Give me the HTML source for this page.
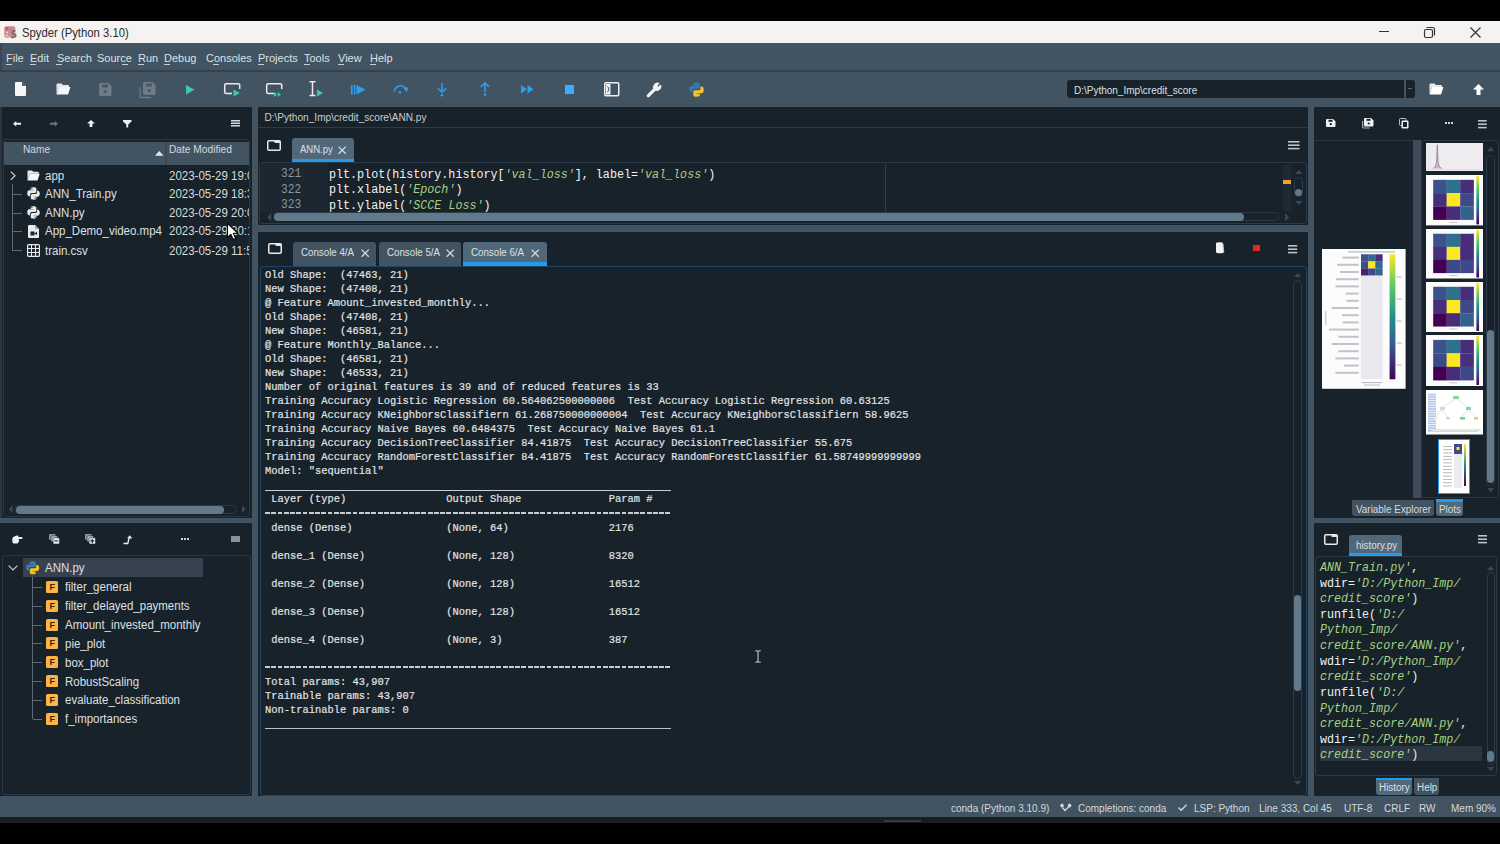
<!DOCTYPE html>
<html><head><meta charset="utf-8">
<style>
*{margin:0;padding:0;box-sizing:border-box}
html,body{width:1500px;height:844px;overflow:hidden;background:#000}
body{position:relative;font-family:"Liberation Sans",sans-serif;color:#E0E1E3}
.a{position:absolute}
svg.a{overflow:visible}
.t{position:absolute;white-space:pre;line-height:1}
.s{font-family:"Liberation Sans",sans-serif}
.m{font-family:"Liberation Mono",monospace}
</style></head><body>
<div class="a" style="left:0px;top:107px;width:1500px;height:689px;background:#425462;"></div><div class="a" style="left:0px;top:21px;width:1500px;height:22px;background:#F4F3F1;"></div><svg class="a" style="left:3.5px;top:26px" width="12.5" height="12" viewBox="0 0 12.5 12"><rect x="0.3" y="0.3" width="11" height="11.4" rx="2.2" fill="#D08A8A"/><rect x="1.2" y="1.2" width="3" height="3" fill="#C06868"/><rect x="5.5" y="1.5" width="2.5" height="2.2" fill="#C87676"/><circle cx="3.2" cy="6.5" r="1.1" fill="#F2D2D2"/><rect x="1.5" y="9" width="2.6" height="1.2" fill="#F5E0E0"/><path d="M11.5 4.8Q8.5 4.3 8.2 6.4Q8.2 8 10.3 8.3Q12.2 8.6 11.6 10.3Q10.8 11.7 6.6 11.2" fill="none" stroke="#6a6a6a" stroke-width="1.6"/><path d="M4.5 11.2h2.2" stroke="#f3e5e5" stroke-width="1"/></svg><div class="t s" style="left:22.00px;top:26.68px;font-size:12.43px;color:#2a2a2a;transform:scaleX(0.9091);transform-origin:0 0;">Spyder (Python 3.10)</div><div class="a" style="left:1379px;top:31px;width:10px;height:1px;background:#333;"></div><svg class="a" style="left:1424px;top:27px" width="11" height="11" viewBox="0 0 11 11"><rect x="0.5" y="2.5" width="8" height="8" rx="1.5" fill="none" stroke="#333" stroke-width="1.2"/><path d="M2.5 0.5h6a2 2 0 0 1 2 2v6" fill="none" stroke="#333" stroke-width="1.2"/></svg><svg class="a" style="left:1470px;top:27px" width="11" height="11" viewBox="0 0 11 11"><path d="M0.5 0.5L10.5 10.5M10.5 0.5L0.5 10.5" stroke="#333" stroke-width="1.2"/></svg><div class="a" style="left:0px;top:43px;width:1500px;height:27px;background:#425462;"></div><div class="a" style="left:0px;top:70px;width:1500px;height:37px;background:#425462;"></div><div class="a" style="left:0px;top:43px;width:2px;height:27px;background:#3a4655;"></div><div class="a" style="left:0px;top:70px;width:1500px;height:1.6px;background:#33414e;"></div><div class="t s" style="left:5.60px;top:52.04px;font-size:11.77px;color:#DDE0E3;transform:scaleX(0.9346);transform-origin:0 0;">File</div><div class="t s" style="left:29.90px;top:52.04px;font-size:11.77px;color:#DDE0E3;transform:scaleX(0.9346);transform-origin:0 0;">Edit</div><div class="t s" style="left:56.50px;top:52.04px;font-size:11.77px;color:#DDE0E3;transform:scaleX(0.9346);transform-origin:0 0;">Search</div><div class="t s" style="left:97.00px;top:52.04px;font-size:11.77px;color:#DDE0E3;transform:scaleX(0.9346);transform-origin:0 0;">Source</div><div class="t s" style="left:138.40px;top:52.04px;font-size:11.77px;color:#DDE0E3;transform:scaleX(0.9346);transform-origin:0 0;">Run</div><div class="t s" style="left:164.30px;top:52.04px;font-size:11.77px;color:#DDE0E3;transform:scaleX(0.9346);transform-origin:0 0;">Debug</div><div class="t s" style="left:205.90px;top:52.04px;font-size:11.77px;color:#DDE0E3;transform:scaleX(0.9346);transform-origin:0 0;">Consoles</div><div class="t s" style="left:257.80px;top:52.04px;font-size:11.77px;color:#DDE0E3;transform:scaleX(0.9346);transform-origin:0 0;">Projects</div><div class="t s" style="left:303.80px;top:52.04px;font-size:11.77px;color:#DDE0E3;transform:scaleX(0.9346);transform-origin:0 0;">Tools</div><div class="t s" style="left:337.60px;top:52.04px;font-size:11.77px;color:#DDE0E3;transform:scaleX(0.9346);transform-origin:0 0;">View</div><div class="t s" style="left:369.60px;top:52.04px;font-size:11.77px;color:#DDE0E3;transform:scaleX(0.9346);transform-origin:0 0;">Help</div><div class="a" style="left:6px;top:64px;width:6px;height:1px;background:#C9CDD0;"></div><div class="a" style="left:30px;top:64px;width:6px;height:1px;background:#C9CDD0;"></div><div class="a" style="left:56px;top:64px;width:6px;height:1px;background:#C9CDD0;"></div><div class="a" style="left:122px;top:64px;width:6px;height:1px;background:#C9CDD0;"></div><div class="a" style="left:138px;top:64px;width:6px;height:1px;background:#C9CDD0;"></div><div class="a" style="left:164px;top:64px;width:6px;height:1px;background:#C9CDD0;"></div><div class="a" style="left:213px;top:64px;width:6px;height:1px;background:#C9CDD0;"></div><div class="a" style="left:258px;top:64px;width:6px;height:1px;background:#C9CDD0;"></div><div class="a" style="left:304px;top:64px;width:6px;height:1px;background:#C9CDD0;"></div><div class="a" style="left:338px;top:64px;width:6px;height:1px;background:#C9CDD0;"></div><div class="a" style="left:370px;top:64px;width:6px;height:1px;background:#C9CDD0;"></div><svg class="a" style="left:15px;top:82px" width="11" height="14" viewBox="0 0 11 14"><path d="M0 1a1 1 0 0 1 1-1h6l4 4v9a1 1 0 0 1-1 1H1a1 1 0 0 1-1-1z" fill="#F5F6F7"/><path d="M7 0l4 4H8a1 1 0 0 1-1-1z" fill="#555"/></svg><svg class="a" style="left:55.6px;top:83px" width="15" height="12" viewBox="0 0 15 12"><path d="M0.5 1.5a1 1 0 0 1 1-1h4l1.5 1.5h5a1 1 0 0 1 1 1v1H3L0.5 11z" fill="#E6E8EA"/><path d="M3 4h11.5l-2.5 7.5H0.5z" fill="#F5F6F7"/></svg><svg class="a" style="left:98.6px;top:83px" width="12.5" height="13" viewBox="0 0 12.5 13"><path d="M0 1.5A1.5 1.5 0 0 1 1.5 0h8L12.5 3v8.5a1.5 1.5 0 0 1-1.5 1.5H1.5A1.5 1.5 0 0 1 0 11.5z" fill="#6F7A85"/><rect x="3" y="1.5" width="6" height="3" fill="#4a5664"/><circle cx="6.2" cy="8.5" r="1.6" fill="#4a5664"/></svg><svg class="a" style="left:139.5px;top:81.6px" width="15.5" height="15.5" viewBox="0 0 15.5 15.5"><path d="M0 5v9a1.5 1.5 0 0 0 1.5 1.5h9" fill="none" stroke="#6F7A85" stroke-width="1.3"/><path d="M3 1.5A1.5 1.5 0 0 1 4.5 0h8L15.5 3v8.5a1.5 1.5 0 0 1-1.5 1.5H4.5A1.5 1.5 0 0 1 3 11.5z" fill="#6F7A85"/><rect x="6" y="1.5" width="6" height="3" fill="#4a5664"/><circle cx="9.2" cy="8.5" r="1.6" fill="#4a5664"/></svg><svg class="a" style="left:186px;top:85px" width="9" height="9.5" viewBox="0 0 9 9.5"><path d="M0 0L8.5 4.75L0 9.5z" fill="#3CC8A9"/></svg><svg class="a" style="left:224px;top:83px" width="17" height="14" viewBox="0 0 17 14"><path d="M8 10.5H2.2a1.5 1.5 0 0 1-1.5-1.5V2.2A1.5 1.5 0 0 1 2.2 0.7h12a1.5 1.5 0 0 1 1.5 1.5V6" fill="none" stroke="#E8EAEC" stroke-width="1.5"/><path d="M9.5 6.5L16 10L9.5 13.5z" fill="#3CC8A9"/></svg><svg class="a" style="left:266px;top:83px" width="17" height="14" viewBox="0 0 17 14"><path d="M8 10.5H2.2a1.5 1.5 0 0 1-1.5-1.5V2.2A1.5 1.5 0 0 1 2.2 0.7h12a1.5 1.5 0 0 1 1.5 1.5V6" fill="none" stroke="#E8EAEC" stroke-width="1.5"/><path d="M8 9L11.2 11.5L8 14zM11.8 9L15 11.5L11.8 14z" fill="#3CC8A9"/></svg><svg class="a" style="left:309px;top:81px" width="15" height="16" viewBox="0 0 15 16"><path d="M0.5 0.8h6M0.5 14.6h6M3.5 0.8v13.8" fill="none" stroke="#E8EAEC" stroke-width="1.5"/><path d="M8 8.5L14 12L8 15.5z" fill="#3CC8A9"/></svg><svg class="a" style="left:350.7px;top:85px" width="15" height="9.5" viewBox="0 0 15 9.5"><rect x="0" y="0" width="1.6" height="9.5" fill="#2E9FEF"/><rect x="2.8" y="0" width="1.6" height="9.5" fill="#2E9FEF"/><path d="M5.5 0L14.7 4.75L5.5 9.5z" fill="#2E9FEF"/></svg><svg class="a" style="left:393px;top:84px" width="16" height="10" viewBox="0 0 16 10"><path d="M1.5 7.5A6 6 0 0 1 12.5 4.5" fill="none" stroke="#2E9FEF" stroke-width="1.6"/><path d="M10.5 3.5L15.5 3.5L13.5 8.5z" fill="#2E9FEF"/><circle cx="7" cy="8.3" r="1.3" fill="#2E9FEF"/></svg><svg class="a" style="left:437px;top:82.5px" width="10" height="14" viewBox="0 0 10 14"><path d="M5 0v8.5" stroke="#2E9FEF" stroke-width="1.5"/><path d="M0.8 5.2L5 9.2L9.2 5.2" fill="none" stroke="#2E9FEF" stroke-width="1.5"/><circle cx="5" cy="12.3" r="1.3" fill="#2E9FEF"/></svg><svg class="a" style="left:479.5px;top:82px" width="10" height="14" viewBox="0 0 10 14"><path d="M5 1v9" stroke="#2E9FEF" stroke-width="1.5"/><path d="M0.8 5L5 0.9L9.2 5" fill="none" stroke="#2E9FEF" stroke-width="1.5"/><circle cx="5" cy="12.6" r="1.3" fill="#2E9FEF"/></svg><svg class="a" style="left:521px;top:85.3px" width="13" height="8.5" viewBox="0 0 13 8.5"><path d="M0 0L6 4.25L0 8.5zM6.5 0L12.5 4.25L6.5 8.5z" fill="#2E9FEF"/></svg><div class="a" style="left:564.6px;top:84.9px;width:9.4px;height:9.3px;background:#37AEFE;"></div><svg class="a" style="left:604px;top:82px" width="15.5" height="14.5" viewBox="0 0 15.5 14.5"><rect x="0.75" y="0.75" width="14" height="13" rx="1.2" fill="none" stroke="#EEF0F2" stroke-width="1.5"/><rect x="2" y="2" width="4.5" height="10.5" fill="#EEF0F2"/><path d="M3.2 4.5l1.5 1.2v3.1L3.2 10" stroke="#425462" stroke-width="1" fill="none"/></svg><svg class="a" style="left:646px;top:81.5px" width="16" height="16" viewBox="0 0 16 16"><path d="M1.6 13.2L8 6.8A4 4 0 0 1 12.6 1.4L10.6 3.6L11.2 4.8L12.4 5.4L14.6 3.4A4 4 0 0 1 9.2 8L2.8 14.4a0.85 0.85 0 0 1-1.2-1.2z" fill="#F3F4F5" stroke="#F3F4F5" stroke-width="1.4" stroke-linejoin="round"/></svg><svg class="a" style="left:689px;top:82.4px" width="15" height="15" viewBox="0 0 15 15"><path d="M7.3 0.3C4 0.3 4.2 1.7 4.2 1.7V3.3h3.2v0.5H2.6S0.3 3.6 0.3 7.1s2 3.4 2 3.4h1.2V8.8s-0.1-2 2-2h3.3s1.9 0 1.9-1.9V1.9S10.9 0.3 7.3 0.3z" fill="#3B77A8"/><path d="M7.7 14.7c3.3 0 3.1-1.4 3.1-1.4v-1.6H7.6v-0.5h4.8s2.3 0.3 2.3-3.3-2-3.4-2-3.4h-1.2v1.7s0.1 2-2 2H6.2s-1.9 0-1.9 1.9v3.1s-0.3 1.6 3.4 1.6z" fill="#F2C230"/></svg><div class="a" style="left:1067px;top:80px;width:337px;height:18px;background:#17222A;border-radius:3px 0 0 3px"></div><div class="a" style="left:1406px;top:80px;width:9px;height:18px;background:#17222A;border-radius:0 3px 3px 0"></div><div class="a" style="left:1408px;top:88px;width:4px;height:1px;background:#51677A;"></div><div class="t s" style="left:1073.50px;top:85.14px;font-size:10.7px;color:#DDE0E3;transform:scaleX(0.9346);transform-origin:0 0;">D:\Python_Imp\credit_score</div><svg class="a" style="left:1429px;top:83px" width="15" height="12" viewBox="0 0 15 12"><path d="M0.5 1.5a1 1 0 0 1 1-1h4l1.5 1.5h5a1 1 0 0 1 1 1v1H3L0.5 11z" fill="#E6E8EA"/><path d="M3 4h11.5l-2.5 7.5H0.5z" fill="#FFFFFF"/></svg><svg class="a" style="left:1473px;top:84px" width="11" height="11" viewBox="0 0 11 11"><path d="M5.5 0L11 5.5H7.5V11h-4V5.5H0z" fill="#FFFFFF"/></svg><div class="a" style="left:0px;top:796px;width:1500px;height:21px;background:#425462;"></div><div class="a" style="left:0px;top:817px;width:1500px;height:6px;background:#1d1d1f;"></div><div class="a" style="left:884px;top:820px;width:37px;height:2px;background:#3a3a3c;"></div><div class="t s" style="left:951.20px;top:803.14px;font-size:10.7px;color:#D5D8DB;transform:scaleX(0.9346);transform-origin:0 0;">conda (Python 3.10.9)</div><div class="t s" style="left:1078.00px;top:803.14px;font-size:10.7px;color:#D5D8DB;transform:scaleX(0.9346);transform-origin:0 0;">Completions: conda</div><div class="t s" style="left:1193.90px;top:803.14px;font-size:10.7px;color:#D5D8DB;transform:scaleX(0.9346);transform-origin:0 0;">LSP: Python</div><div class="t s" style="left:1259.20px;top:803.14px;font-size:10.7px;color:#D5D8DB;transform:scaleX(0.9346);transform-origin:0 0;">Line 333, Col 45</div><div class="t s" style="left:1344.00px;top:803.14px;font-size:10.7px;color:#D5D8DB;transform:scaleX(0.9346);transform-origin:0 0;">UTF-8</div><div class="t s" style="left:1384.00px;top:803.14px;font-size:10.7px;color:#D5D8DB;transform:scaleX(0.9346);transform-origin:0 0;">CRLF</div><div class="t s" style="left:1418.80px;top:803.14px;font-size:10.7px;color:#D5D8DB;transform:scaleX(0.9346);transform-origin:0 0;">RW</div><div class="t s" style="left:1450.50px;top:803.14px;font-size:10.7px;color:#D5D8DB;transform:scaleX(0.9346);transform-origin:0 0;">Mem 90%</div><svg class="a" style="left:1061px;top:803px" width="10" height="9" viewBox="0 0 10 9"><path d="M1 1.5a1 1 0 1 0 0.1 0M8.5 1.5a1 1 0 1 0 0.1 0" stroke="#D5D8DB" stroke-width="1.6" stroke-linecap="round"/><path d="M1.5 4.5L4 7.5L9 2.5" fill="none" stroke="#D5D8DB" stroke-width="1.3"/></svg><svg class="a" style="left:1178px;top:804px" width="9" height="7" viewBox="0 0 9 7"><path d="M0.5 3.5L3.2 6.3L8.5 0.8" fill="none" stroke="#D5D8DB" stroke-width="1.3"/></svg><div class="a" style="left:0px;top:107px;width:252px;height:411px;background:#17222A;"></div><div class="a" style="left:0px;top:107px;width:2px;height:411px;background:#2a3541;"></div><svg class="a" style="left:13.4px;top:120.6px" width="8" height="5.5" viewBox="0 0 8 5.5"><path d="M0 2.75L3.2 0V1.7H8V3.8H3.2V5.5z" fill="#EEF0F2"/></svg><svg class="a" style="left:49.8px;top:120.8px" width="8" height="5.5" viewBox="0 0 8 5.5"><path d="M8 2.75L4.8 0V1.7H0V3.8H4.8V5.5z" fill="#6a7682"/></svg><svg class="a" style="left:86.7px;top:119.7px" width="8" height="7" viewBox="0 0 8 7"><path d="M4 0L8 3.6H5.4V7H2.6V3.6H0z" fill="#EEF0F2"/></svg><svg class="a" style="left:123px;top:119.7px" width="8.5" height="7.5" viewBox="0 0 8.5 7.5"><path d="M0 0h8.5v1.6L5.2 4.5V7.5H3.3V4.5L0 1.6z" fill="#EEF0F2"/></svg><svg class="a" style="left:230.5px;top:120px" width="9" height="6.5" viewBox="0 0 9 6.5"><rect y="0" width="9" height="1.5" fill="#D8DBDE"/><rect y="2.5" width="9" height="1.5" fill="#D8DBDE"/><rect y="5" width="9" height="1.5" fill="#D8DBDE"/></svg><div class="a" style="left:3px;top:139px;width:247px;height:378px;background:#17222A;border:1px solid #2a3643;border-radius:3px"></div><div class="a" style="left:4px;top:142px;width:161px;height:23px;background:#425462;"></div><div class="a" style="left:167px;top:142px;width:82px;height:23px;background:#425462;"></div><div class="a" style="left:165px;top:142px;width:2px;height:23px;background:#3c4858;"></div><div class="t s" style="left:23.40px;top:143.56px;font-size:10.914px;color:#D5D8DB;transform:scaleX(0.9346);transform-origin:0 0;">Name</div><div class="t s" style="left:169.40px;top:143.56px;font-size:10.914px;color:#D5D8DB;transform:scaleX(0.9346);transform-origin:0 0;">Date Modified</div><svg class="a" style="left:155px;top:151px" width="8.5" height="4.8" viewBox="0 0 8.5 4.8"><path d="M4.25 0L8.5 4.8H0z" fill="#E6E8EA"/></svg><div class="t s" style="left:45.40px;top:169.98px;font-size:12.305px;color:#DDE0E3;transform:scaleX(0.9346);transform-origin:0 0;">app</div><div class="a" style="left:168px;top:167.7px;width:81px;height:16px;overflow:hidden"><div class="t s" style="left:0.5px;top:2.29px;font-size:12.3px;transform:scaleX(0.935);transform-origin:0 0;color:#D8DBDE">2023-05-29 19:0</div></div><svg class="a" style="left:27px;top:169.7px" width="13" height="11" viewBox="0 0 13 11"><path d="M0.5 1.5a1 1 0 0 1 1-1h3.5l1.3 1.3h4.5a1 1 0 0 1 1 1v1H2.7L0.5 10.5z" fill="#E6E8EA"/><path d="M2.7 3.8h10l-2.2 6.7H0.5z" fill="#F5F6F7"/></svg><div class="t s" style="left:45.40px;top:188.08px;font-size:12.305px;color:#DDE0E3;transform:scaleX(0.9346);transform-origin:0 0;">ANN_Train.py</div><div class="a" style="left:168px;top:185.8px;width:81px;height:16px;overflow:hidden"><div class="t s" style="left:0.5px;top:2.29px;font-size:12.3px;transform:scaleX(0.935);transform-origin:0 0;color:#D8DBDE">2023-05-29 18:3</div></div><svg class="a" style="left:26.7px;top:187.3px" width="13" height="13" viewBox="0 0 13 13"><path d="M6.4 0.3C3.5 0.3 3.7 1.5 3.7 1.5V2.9h2.8v0.45H2.3S0.3 3.1 0.3 6.2s1.75 3 1.75 3h1.05V7.7s-0.1-1.75 1.75-1.75h2.9s1.65 0 1.65-1.65V1.65S9.55 0.3 6.4 0.3z" fill="#E8EAEC"/><path d="M6.7 12.8c2.9 0 2.7-1.2 2.7-1.2V10.1H6.6V9.65h4.2s2-0.25 2-2.9-1.75-3-1.75-3H10v1.5s0.1 1.75-1.75 1.75H5.4s-1.65 0-1.65 1.65v2.7s-0.25 1.4 2.95 1.4z" fill="#E8EAEC"/><circle cx="4.9" cy="1.6" r="0.6" fill="#17222A"/><circle cx="8.1" cy="11.4" r="0.6" fill="#17222A"/></svg><div class="t s" style="left:45.40px;top:206.88px;font-size:12.305px;color:#DDE0E3;transform:scaleX(0.9346);transform-origin:0 0;">ANN.py</div><div class="a" style="left:168px;top:204.6px;width:81px;height:16px;overflow:hidden"><div class="t s" style="left:0.5px;top:2.29px;font-size:12.3px;transform:scaleX(0.935);transform-origin:0 0;color:#D8DBDE">2023-05-29 20:0</div></div><svg class="a" style="left:26.7px;top:206.1px" width="13" height="13" viewBox="0 0 13 13"><path d="M6.4 0.3C3.5 0.3 3.7 1.5 3.7 1.5V2.9h2.8v0.45H2.3S0.3 3.1 0.3 6.2s1.75 3 1.75 3h1.05V7.7s-0.1-1.75 1.75-1.75h2.9s1.65 0 1.65-1.65V1.65S9.55 0.3 6.4 0.3z" fill="#E8EAEC"/><path d="M6.7 12.8c2.9 0 2.7-1.2 2.7-1.2V10.1H6.6V9.65h4.2s2-0.25 2-2.9-1.75-3-1.75-3H10v1.5s0.1 1.75-1.75 1.75H5.4s-1.65 0-1.65 1.65v2.7s-0.25 1.4 2.95 1.4z" fill="#E8EAEC"/><circle cx="4.9" cy="1.6" r="0.6" fill="#17222A"/><circle cx="8.1" cy="11.4" r="0.6" fill="#17222A"/></svg><div class="t s" style="left:45.40px;top:225.38px;font-size:12.305px;color:#DDE0E3;transform:scaleX(0.9346);transform-origin:0 0;">App_Demo_video.mp4</div><div class="a" style="left:168px;top:223.1px;width:81px;height:16px;overflow:hidden"><div class="t s" style="left:0.5px;top:2.29px;font-size:12.3px;transform:scaleX(0.935);transform-origin:0 0;color:#D8DBDE">2023-05-29 20:1</div></div><svg class="a" style="left:27.5px;top:224.6px" width="11" height="13" viewBox="0 0 11 13"><path d="M0 1a1 1 0 0 1 1-1h6l4 4v8a1 1 0 0 1-1 1H1a1 1 0 0 1-1-1z" fill="#E8EAEC"/><path d="M7 0l4 4H8a1 1 0 0 1-1-1z" fill="#9aa"/><path d="M2.5 6.5h4v4h-4zM6.5 8.5l2.5-1.8v3.6z" fill="#17222A"/></svg><div class="t s" style="left:45.40px;top:244.58px;font-size:12.305px;color:#DDE0E3;transform:scaleX(0.9346);transform-origin:0 0;">train.csv</div><div class="a" style="left:168px;top:242.3px;width:81px;height:16px;overflow:hidden"><div class="t s" style="left:0.5px;top:2.29px;font-size:12.3px;transform:scaleX(0.935);transform-origin:0 0;color:#D8DBDE">2023-05-29 11:5</div></div><svg class="a" style="left:26.5px;top:243.8px" width="13" height="13" viewBox="0 0 13 13"><rect x="0.6" y="0.6" width="11.8" height="11.8" rx="1" fill="none" stroke="#E8EAEC" stroke-width="1.2"/><path d="M0.6 4.5h11.8M0.6 8.5h11.8M4.5 0.6v11.8M8.5 0.6v11.8" stroke="#E8EAEC" stroke-width="1.1"/></svg><svg class="a" style="left:9.5px;top:170.5px" width="6" height="9.5" viewBox="0 0 6 9.5"><path d="M0.8 0.6L5 4.75L0.8 8.9" fill="none" stroke="#C9CDD0" stroke-width="1.3"/></svg><div class="a" style="left:12px;top:184px;width:1px;height:67px;background:#5f6a75;"></div><div class="a" style="left:13px;top:194px;width:9px;height:1px;background:#5f6a75;"></div><div class="a" style="left:13px;top:213px;width:9px;height:1px;background:#5f6a75;"></div><div class="a" style="left:13px;top:231px;width:9px;height:1px;background:#5f6a75;"></div><div class="a" style="left:13px;top:250px;width:9px;height:1px;background:#5f6a75;"></div><svg class="a" style="left:226.5px;top:222.5px" width="12" height="18" viewBox="0 0 12 18"><path d="M0.5 0.5L0.5 14.5L3.8 11.3L6.2 16.6L8.6 15.6L6.3 10.4L10.8 10z" fill="#FFFFFF" stroke="#0a0a0a" stroke-width="1.1" stroke-linejoin="round"/></svg><svg class="a" style="left:8.7px;top:505px" width="4" height="8.5" viewBox="0 0 4 8.5"><path d="M3.5 0L0 4.25L3.5 8.5z" fill="#3c4856"/></svg><div class="a" style="left:14px;top:505px;width:223px;height:9px;background:#17222A;border:1px solid #2d3a47;border-radius:4.5px"></div><div class="a" style="left:15.6px;top:505.5px;width:208px;height:8px;background:#60798B;border-radius:4px"></div><svg class="a" style="left:241.8px;top:505px" width="4" height="8.5" viewBox="0 0 4 8.5"><path d="M0 0L3.5 4.25L0 8.5z" fill="#3c4856"/></svg><div class="a" style="left:0px;top:523px;width:252px;height:273px;background:#17222A;"></div><svg class="a" style="left:11.9px;top:535px" width="10.5" height="9" viewBox="0 0 10.5 9"><path d="M0.3 4.2Q0.3 1.6 2.8 1.2L5.2 0.4Q6 0.2 6.2 1L6.4 2.1H9.6a0.9 0.9 0 0 1 0 1.8H6.6L7 5.2Q7 8.6 4 8.6H2.6Q0.3 8.6 0.3 6z" fill="#EEF0F2"/></svg><svg class="a" style="left:48.9px;top:534.3px" width="10.5" height="10" viewBox="0 0 10.5 10"><rect x="0" y="0" width="6.5" height="6" rx="1" fill="#8d97a1"/><rect x="2" y="1.8" width="6.5" height="6" rx="1" fill="#b9c0c7" stroke="#17222A" stroke-width="0.6"/><rect x="4" y="3.8" width="6.5" height="6.2" rx="1" fill="#EEF0F2" stroke="#17222A" stroke-width="0.6"/><path d="M5.3 6.9h4" stroke="#17222A" stroke-width="1.1"/></svg><svg class="a" style="left:85.3px;top:534.3px" width="10.5" height="10" viewBox="0 0 10.5 10"><rect x="0" y="0" width="6.5" height="6" rx="1" fill="#8d97a1"/><rect x="2" y="1.8" width="6.5" height="6" rx="1" fill="#b9c0c7" stroke="#17222A" stroke-width="0.6"/><rect x="4" y="3.8" width="6.5" height="6.2" rx="1" fill="#EEF0F2" stroke="#17222A" stroke-width="0.6"/><path d="M5.3 6.9h4M7.3 4.9v4" stroke="#17222A" stroke-width="1.1"/></svg><svg class="a" style="left:123px;top:534.5px" width="10" height="9" viewBox="0 0 10 9"><path d="M0.5 8.5H4.8L6.2 2.5" fill="none" stroke="#EEF0F2" stroke-width="1.3"/><path d="M4 3.2L6.8 0.3L9.3 3.6z" fill="#EEF0F2"/></svg><div class="a" style="left:181px;top:538px;width:2px;height:2px;background:#D0D4D8;"></div><div class="a" style="left:184px;top:538px;width:2px;height:2px;background:#D0D4D8;"></div><div class="a" style="left:187px;top:538px;width:2px;height:2px;background:#D0D4D8;"></div><div class="a" style="left:231px;top:535.7px;width:8.5px;height:6.8px;background:#8a939c;"></div><div class="a" style="left:2px;top:555px;width:249px;height:240px;background:#17222A;border:1px solid #2a3643;border-radius:3px"></div><div class="a" style="left:23px;top:558px;width:180px;height:19px;background:#37414F;"></div><svg class="a" style="left:7.6px;top:565px" width="10" height="5.5" viewBox="0 0 10 5.5"><path d="M0.6 0.6L5 4.9L9.4 0.6" fill="none" stroke="#C9CDD0" stroke-width="1.3"/></svg><svg class="a" style="left:26px;top:561px" width="13.5" height="13.5" viewBox="0 0 13.5 13.5"><path d="M6.6 0.3C3.6 0.3 3.8 1.55 3.8 1.55V3h2.9v0.45H2.35S0.3 3.2 0.3 6.4s1.8 3.1 1.8 3.1h1.1V7.9s-0.1-1.8 1.8-1.8h3s1.7 0 1.7-1.7V1.7S9.85 0.3 6.6 0.3z" fill="#3D7AB3"/><path d="M6.9 13.2c3 0 2.8-1.25 2.8-1.25V10.5H6.8v-0.45h4.35s2.05-0.25 2.05-3-1.8-3.1-1.8-3.1h-1.1v1.55s0.1 1.8-1.8 1.8h-3s-1.7 0-1.7 1.7v2.8s-0.25 1.45 3.05 1.45z" fill="#F5C518"/></svg><div class="t s" style="left:45.30px;top:562.18px;font-size:12.305px;color:#DDE0E3;transform:scaleX(0.9346);transform-origin:0 0;">ANN.py</div><div class="a" style="left:32px;top:577px;width:1px;height:142px;background:#5f6a75;"></div><div class="a" style="left:33px;top:587px;width:9px;height:1px;background:#5f6a75;"></div><div class="a" style="left:46.2px;top:581px;width:12px;height:12px;background:#FBB445;border-radius:1.5px"></div><div class="t s" style="left:49.50px;top:583.18px;font-size:9px;color:#3d2800;font-weight:bold">F</div><div class="t s" style="left:65.30px;top:581.48px;font-size:12.305px;color:#DDE0E3;transform:scaleX(0.9346);transform-origin:0 0;">filter_general</div><div class="a" style="left:33px;top:606px;width:9px;height:1px;background:#5f6a75;"></div><div class="a" style="left:46.2px;top:600px;width:12px;height:12px;background:#FBB445;border-radius:1.5px"></div><div class="t s" style="left:49.50px;top:602.18px;font-size:9px;color:#3d2800;font-weight:bold">F</div><div class="t s" style="left:65.30px;top:600.30px;font-size:12.305px;color:#DDE0E3;transform:scaleX(0.9346);transform-origin:0 0;">filter_delayed_payments</div><div class="a" style="left:33px;top:625px;width:9px;height:1px;background:#5f6a75;"></div><div class="a" style="left:46.2px;top:619px;width:12px;height:12px;background:#FBB445;border-radius:1.5px"></div><div class="t s" style="left:49.50px;top:621.18px;font-size:9px;color:#3d2800;font-weight:bold">F</div><div class="t s" style="left:65.30px;top:619.12px;font-size:12.305px;color:#DDE0E3;transform:scaleX(0.9346);transform-origin:0 0;">Amount_invested_monthly</div><div class="a" style="left:33px;top:643px;width:9px;height:1px;background:#5f6a75;"></div><div class="a" style="left:46.2px;top:637px;width:12px;height:12px;background:#FBB445;border-radius:1.5px"></div><div class="t s" style="left:49.50px;top:639.18px;font-size:9px;color:#3d2800;font-weight:bold">F</div><div class="t s" style="left:65.30px;top:637.94px;font-size:12.305px;color:#DDE0E3;transform:scaleX(0.9346);transform-origin:0 0;">pie_plot</div><div class="a" style="left:33px;top:662px;width:9px;height:1px;background:#5f6a75;"></div><div class="a" style="left:46.2px;top:656px;width:12px;height:12px;background:#FBB445;border-radius:1.5px"></div><div class="t s" style="left:49.50px;top:658.18px;font-size:9px;color:#3d2800;font-weight:bold">F</div><div class="t s" style="left:65.30px;top:656.76px;font-size:12.305px;color:#DDE0E3;transform:scaleX(0.9346);transform-origin:0 0;">box_plot</div><div class="a" style="left:33px;top:681px;width:9px;height:1px;background:#5f6a75;"></div><div class="a" style="left:46.2px;top:675px;width:12px;height:12px;background:#FBB445;border-radius:1.5px"></div><div class="t s" style="left:49.50px;top:677.18px;font-size:9px;color:#3d2800;font-weight:bold">F</div><div class="t s" style="left:65.30px;top:675.58px;font-size:12.305px;color:#DDE0E3;transform:scaleX(0.9346);transform-origin:0 0;">RobustScaling</div><div class="a" style="left:33px;top:700px;width:9px;height:1px;background:#5f6a75;"></div><div class="a" style="left:46.2px;top:694px;width:12px;height:12px;background:#FBB445;border-radius:1.5px"></div><div class="t s" style="left:49.50px;top:696.18px;font-size:9px;color:#3d2800;font-weight:bold">F</div><div class="t s" style="left:65.30px;top:694.40px;font-size:12.305px;color:#DDE0E3;transform:scaleX(0.9346);transform-origin:0 0;">evaluate_classification</div><div class="a" style="left:33px;top:719px;width:9px;height:1px;background:#5f6a75;"></div><div class="a" style="left:46.2px;top:713px;width:12px;height:12px;background:#FBB445;border-radius:1.5px"></div><div class="t s" style="left:49.50px;top:715.18px;font-size:9px;color:#3d2800;font-weight:bold">F</div><div class="t s" style="left:65.30px;top:713.22px;font-size:12.305px;color:#DDE0E3;transform:scaleX(0.9346);transform-origin:0 0;">f_importances</div><div class="a" style="left:258px;top:107px;width:1050px;height:118px;background:#17222A;"></div><div class="t s" style="left:264.40px;top:113.15px;font-size:10.1px;color:#C9CDD0;">D:\Python_Imp\credit_score\ANN.py</div><div class="a" style="left:258px;top:127px;width:1050px;height:1px;background:#2c3947;"></div><svg class="a" style="left:267.3px;top:139.8px" width="14" height="11" viewBox="0 0 14 11"><rect x="0.75" y="0.75" width="12.5" height="9.5" rx="1.2" fill="none" stroke="#E8EAEC" stroke-width="1.5"/><rect x="7.5" y="0.75" width="5.8" height="2.2" fill="#E8EAEC"/></svg><div class="a" style="left:292.3px;top:138.3px;width:61.7px;height:24px;background:#51677A;border-radius:3px 3px 0 0"></div><div class="a" style="left:292.3px;top:158.8px;width:61.7px;height:3.4px;background:#259AE9;"></div><div class="t s" style="left:299.80px;top:145.20px;font-size:10.165px;color:#DDE0E3;transform:scaleX(0.9346);transform-origin:0 0;">ANN.py</div><svg class="a" style="left:338px;top:145.6px" width="8.4" height="8.4" viewBox="0 0 8.4 8.4"><path d="M0.6 0.6L7.800000000000001 7.800000000000001M7.800000000000001 0.6L0.6 7.800000000000001" stroke="#D8DBDE" stroke-width="1.3"/></svg><svg class="a" style="left:1288px;top:140.7px" width="11.5" height="8.5" viewBox="0 0 11.5 8.5"><rect y="0" width="11.5" height="1.6" fill="#BCC2C8"/><rect y="3.4" width="11.5" height="1.6" fill="#BCC2C8"/><rect y="6.8" width="11.5" height="1.6" fill="#BCC2C8"/></svg><div class="a" style="left:259px;top:162px;width:1048px;height:62px;background:#17222A;border:1px solid #2c3947;border-radius:3px"></div><div class="a" style="left:260px;top:163px;width:67.5px;height:50px;background:#1C2731;"></div><div class="t m" style="left:281.00px;top:167.99px;font-size:12.544px;color:#8C96A0;transform:scaleX(0.8929);transform-origin:0 0;">321</div><div class="t m" style="left:329.4px;top:168.60px;font-size:12.65px;transform:scaleX(0.9257);transform-origin:0 0;color:#F2F3F4">plt.plot(history.history[<i style="color:#A6D282">'val_loss'</i>], label=<i style="color:#A6D282">'val_loss'</i>)</div><div class="t m" style="left:281.00px;top:183.54px;font-size:12.544px;color:#8C96A0;transform:scaleX(0.8929);transform-origin:0 0;">322</div><div class="t m" style="left:329.4px;top:184.15px;font-size:12.65px;transform:scaleX(0.9257);transform-origin:0 0;color:#F2F3F4">plt.xlabel(<i style="color:#A6D282">'Epoch'</i>)</div><div class="t m" style="left:281.00px;top:199.09px;font-size:12.544px;color:#8C96A0;transform:scaleX(0.8929);transform-origin:0 0;">323</div><div class="t m" style="left:329.4px;top:199.70px;font-size:12.65px;transform:scaleX(0.9257);transform-origin:0 0;color:#F2F3F4">plt.ylabel(<i style="color:#A6D282">'SCCE Loss'</i>)</div><div class="a" style="left:885px;top:164px;width:1px;height:49px;background:#323e4a;"></div><div class="a" style="left:1283px;top:165px;width:8px;height:46px;background:#1e2a35;"></div><div class="a" style="left:1283.3px;top:180.4px;width:7.7px;height:3.5px;background:#F0A030;"></div><svg class="a" style="left:1294.5px;top:169.7px" width="7.7" height="4" viewBox="0 0 7.7 4"><path d="M3.85 0L7.7 4H0z" fill="#3c4856"/></svg><div class="a" style="left:1294px;top:177.4px;width:9px;height:20px;background:#17222A;border:1px solid #2d3a47;border-radius:4.5px"></div><div class="a" style="left:1294.8px;top:189.2px;width:7.4px;height:7.2px;background:#60798B;border-radius:3.7px"></div><svg class="a" style="left:1294.5px;top:201px" width="7.7" height="4" viewBox="0 0 7.7 4"><path d="M0 0H7.7L3.85 4z" fill="#3c4856"/></svg><svg class="a" style="left:266.6px;top:213px" width="4.3" height="8.4" viewBox="0 0 4.3 8.4"><path d="M4.3 0L0 4.2L4.3 8.4z" fill="#3c4856"/></svg><div class="a" style="left:272.5px;top:212.3px;width:1006.5px;height:9px;background:#17222A;border:1px solid #2d3a47;border-radius:4.5px"></div><div class="a" style="left:273.8px;top:212.8px;width:969.8px;height:8px;background:#60798B;border-radius:4px"></div><svg class="a" style="left:1285px;top:213px" width="4.2" height="8.4" viewBox="0 0 4.2 8.4"><path d="M0 0L4.2 4.2L0 8.4z" fill="#3c4856"/></svg><div class="a" style="left:258px;top:232px;width:1050px;height:564px;background:#17222A;"></div><svg class="a" style="left:268px;top:243px" width="14" height="11" viewBox="0 0 14 11"><rect x="0.75" y="0.75" width="12.5" height="9.5" rx="1.2" fill="none" stroke="#E8EAEC" stroke-width="1.5"/><rect x="7.5" y="0.75" width="5.8" height="2.2" fill="#E8EAEC"/></svg><div class="a" style="left:293px;top:242px;width:83px;height:23.6px;background:#425462;border-radius:3px 3px 0 0"></div><div class="t s" style="left:301.20px;top:248.17px;font-size:10.433px;color:#DDE0E3;transform:scaleX(0.9346);transform-origin:0 0;">Console 4/A</div><svg class="a" style="left:360.6px;top:248.8px" width="8.4" height="8.4" viewBox="0 0 8.4 8.4"><path d="M0.6 0.6L7.800000000000001 7.800000000000001M7.800000000000001 0.6L0.6 7.800000000000001" stroke="#D8DBDE" stroke-width="1.3"/></svg><div class="a" style="left:378.6px;top:242px;width:82.39999999999998px;height:23.6px;background:#425462;border-radius:3px 3px 0 0"></div><div class="t s" style="left:386.80px;top:248.17px;font-size:10.433px;color:#DDE0E3;transform:scaleX(0.9346);transform-origin:0 0;">Console 5/A</div><svg class="a" style="left:446.20000000000005px;top:248.8px" width="8.4" height="8.4" viewBox="0 0 8.4 8.4"><path d="M0.6 0.6L7.800000000000001 7.800000000000001M7.800000000000001 0.6L0.6 7.800000000000001" stroke="#D8DBDE" stroke-width="1.3"/></svg><div class="a" style="left:463.2px;top:242px;width:83.59999999999997px;height:23.6px;background:#51677A;border-radius:3px 3px 0 0"></div><div class="a" style="left:463.2px;top:262.4px;width:83.59999999999997px;height:3.2px;background:#259AE9;"></div><div class="t s" style="left:471.40px;top:248.17px;font-size:10.433px;color:#DDE0E3;transform:scaleX(0.9346);transform-origin:0 0;">Console 6/A</div><svg class="a" style="left:530.8px;top:248.8px" width="8.4" height="8.4" viewBox="0 0 8.4 8.4"><path d="M0.6 0.6L7.800000000000001 7.800000000000001M7.800000000000001 0.6L0.6 7.800000000000001" stroke="#D8DBDE" stroke-width="1.3"/></svg><svg class="a" style="left:1215px;top:242.4px" width="9.5" height="11.5" viewBox="0 0 9.5 11.5"><path d="M1 1.5Q1 0.3 4.5 0.3Q8 0.3 8 1.5L9 10Q9 11.3 5 11.3Q1 11.3 1 10z" fill="#F2F3F4"/><path d="M7.8 1.5L8.8 9.8" stroke="#b8bec4" stroke-width="1"/></svg><div class="a" style="left:1253px;top:244.6px;width:6.8px;height:6.6px;background:#E8261A;"></div><svg class="a" style="left:1288.4px;top:245px" width="9.2" height="8.5" viewBox="0 0 9.2 8.5"><rect y="0" width="9.2" height="1.6" fill="#BCC2C8"/><rect y="3.4" width="9.2" height="1.6" fill="#BCC2C8"/><rect y="6.8" width="9.2" height="1.6" fill="#BCC2C8"/></svg><div class="a" style="left:259.5px;top:265.8px;width:1047.5px;height:530px;background:#17222A;border:1.5px solid #1F4466;border-radius:3px"></div><svg class="a" style="left:1294px;top:273px" width="7.4" height="4" viewBox="0 0 7.4 4"><path d="M3.7 0L7.4 4H0z" fill="#3c4856"/></svg><div class="a" style="left:1293px;top:280px;width:9px;height:499px;background:#17222A;border:1px solid #2d3a47;border-radius:4.5px"></div><div class="a" style="left:1293.8px;top:595px;width:7.4px;height:96px;background:#60798B;border-radius:3.7px"></div><svg class="a" style="left:1294px;top:781px" width="7.4" height="4" viewBox="0 0 7.4 4"><path d="M0 0H7.4L3.7 4z" fill="#3c4856"/></svg><div class="a m" style="left:264.6px;top:267.71px;font-size:11.468px;transform:scaleX(0.9091);transform-origin:0 0;line-height:14.04px;white-space:pre;color:#E2E4E6;-webkit-text-stroke:0.2px #E2E4E6">Old Shape:  (47463, 21)
New Shape:  (47408, 21)
@ Feature Amount_invested_monthly...
Old Shape:  (47408, 21)
New Shape:  (46581, 21)
@ Feature Monthly_Balance...
Old Shape:  (46581, 21)
New Shape:  (46533, 21)
Number of original features is 39 and of reduced features is 33
Training Accuracy Logistic Regression 60.564062500000006  Test Accuracy Logistic Regression 60.63125
Training Accuracy KNeighborsClassifiern 61.268750000000004  Test Accuracy KNeighborsClassifiern 58.9625
Training Accuracy Naive Bayes 60.6484375  Test Accuracy Naive Bayes 61.1
Training Accuracy DecisionTreeClassifier 84.41875  Test Accuracy DecisionTreeClassifier 55.675
Training Accuracy RandomForestClassifier 84.41875  Test Accuracy RandomForestClassifier 61.58749999999999
Model: "sequential"

 Layer (type)                Output Shape              Param #

 dense (Dense)               (None, 64)                2176

 dense_1 (Dense)             (None, 128)               8320

 dense_2 (Dense)             (None, 128)               16512

 dense_3 (Dense)             (None, 128)               16512

 dense_4 (Dense)             (None, 3)                 387


Total params: 43,907
Trainable params: 43,907
Non-trainable params: 0</div><div class="a" style="left:264.6px;top:490px;width:406.6px;height:1.4px;background:#C9CDD0;"></div><div class="a" style="left:264.6px;top:727.5px;width:406.6px;height:1.1px;background:#B9BEC3;"></div><div class="a" style="left:264.6px;top:512.3px;width:406.6px;height:2.2px;background:repeating-linear-gradient(90deg,#C9CDD0 0,#C9CDD0 4.9px,transparent 4.9px,transparent 6.256px);"></div><div class="a" style="left:264.6px;top:666.3px;width:406.6px;height:2.2px;background:repeating-linear-gradient(90deg,#C9CDD0 0,#C9CDD0 4.9px,transparent 4.9px,transparent 6.256px);"></div><svg class="a" style="left:754.5px;top:650.3px" width="6" height="13" viewBox="0 0 6 13"><path d="M0.3 0.6Q3 0.6 3 2.2Q3 0.6 5.7 0.6M0.3 12.4Q3 12.4 3 10.8Q3 12.4 5.7 12.4M3 1.8v9.4" fill="none" stroke="#A9B1B9" stroke-width="1.3"/></svg><div class="a" style="left:1314px;top:107px;width:186px;height:411px;background:#17222A;"></div><svg class="a" style="left:1325.8px;top:118.8px" width="9.5" height="8" viewBox="0 0 9.5 8"><path d="M0 1a1 1 0 0 1 1-1h6l2.5 2.5V7a1 1 0 0 1-1 1H1a1 1 0 0 1-1-1z" fill="#EEF0F2"/><rect x="2.5" y="0.8" width="4" height="2" fill="#17222A"/><circle cx="4.75" cy="5.2" r="1.1" fill="#17222A"/></svg><svg class="a" style="left:1361.7px;top:118px" width="11.5" height="10.5" viewBox="0 0 11.5 10.5"><path d="M0.6 3v5.8a1.2 1.2 0 0 0 1.2 1.2h6" fill="none" stroke="#aab2ba" stroke-width="1.1"/><path d="M2 1a1 1 0 0 1 1-1h6l2.5 2.5V7.5a1 1 0 0 1-1 1H3a1 1 0 0 1-1-1z" fill="#EEF0F2"/><rect x="4.5" y="0.8" width="4" height="2" fill="#17222A"/><circle cx="6.75" cy="5.5" r="1.1" fill="#17222A"/></svg><svg class="a" style="left:1399px;top:118px" width="10" height="10.5" viewBox="0 0 10 10.5"><rect x="0.5" y="0.5" width="6.5" height="7" rx="1" fill="none" stroke="#b8bfc6" stroke-width="1"/><rect x="2.5" y="2.5" width="7" height="8" rx="1.2" fill="#EEF0F2"/><rect x="4" y="4" width="4" height="5" fill="#17222A"/></svg><div class="a" style="left:1445.4px;top:122px;width:2px;height:2px;background:#D0D4D8;"></div><div class="a" style="left:1448.3000000000002px;top:122px;width:2px;height:2px;background:#D0D4D8;"></div><div class="a" style="left:1451.2px;top:122px;width:2px;height:2px;background:#D0D4D8;"></div><svg class="a" style="left:1478.3px;top:120px" width="8.7" height="8.5" viewBox="0 0 8.7 8.5"><rect y="0" width="8.7" height="1.6" fill="#BCC2C8"/><rect y="3.4" width="8.7" height="1.6" fill="#BCC2C8"/><rect y="6.8" width="8.7" height="1.6" fill="#BCC2C8"/></svg><div class="a" style="left:1314px;top:140px;width:99.2px;height:357.5px;background:#17222A;border-top:1px solid #2a3643"></div><div class="a" style="left:1413.2px;top:140px;width:8.1px;height:357.5px;background:#3f4b59;"></div><div class="a" style="left:1421.3px;top:140px;width:77.4px;height:357.5px;background:#17222A;border:1px solid #2a3643;border-radius:3px"></div><svg class="a" style="left:1322.4px;top:249px" width="83.6" height="139.8" viewBox="0 0 83.6 139.8"><rect width="83.6" height="139.8" fill="#FCFCFD"/><rect x="26" y="2.3" width="47" height="1.2" fill="#b8b8c0"/><rect x="39.00" y="5.30" width="7.3" height="7.25" fill="#3b528b"/><rect x="46.17" y="5.30" width="7.3" height="7.25" fill="#31688e"/><rect x="53.34" y="5.30" width="7.3" height="7.25" fill="#472d7b"/><rect x="39.00" y="12.40" width="7.3" height="7.25" fill="#3e4a89"/><rect x="46.17" y="12.40" width="7.3" height="7.25" fill="#fde725"/><rect x="53.34" y="12.40" width="7.3" height="7.25" fill="#31688e"/><rect x="39.00" y="19.50" width="7.3" height="7.25" fill="#482173"/><rect x="46.17" y="19.50" width="7.3" height="7.25" fill="#3e4989"/><rect x="53.34" y="19.50" width="7.3" height="7.25" fill="#31688e"/><rect x="39" y="26.6" width="21.5" height="103.5" fill="#E9E8EF"/><defs><linearGradient id="vir2" x1="0" y1="1" x2="0" y2="0"><stop offset="0" stop-color="#440154"/><stop offset="0.25" stop-color="#3b528b"/><stop offset="0.5" stop-color="#21918c"/><stop offset="0.75" stop-color="#5ec962"/><stop offset="1" stop-color="#fde725"/></linearGradient></defs><rect x="67.6" y="5.3" width="5.8" height="125" fill="url(#vir2)"/><rect x="20.5" y="7.6" width="16.3" height="2.0" fill="#c2c2ca"/><rect x="15.0" y="14.8" width="21.8" height="2.0" fill="#c2c2ca"/><rect x="18.1" y="22.0" width="18.7" height="2.0" fill="#c2c2ca"/><rect x="13.9" y="29.2" width="22.9" height="2.0" fill="#c2c2ca"/><rect x="13.5" y="36.4" width="23.3" height="2.0" fill="#c2c2ca"/><rect x="23.6" y="43.6" width="13.2" height="2.0" fill="#c2c2ca"/><rect x="24.6" y="50.8" width="12.2" height="2.0" fill="#c2c2ca"/><rect x="9.7" y="58.0" width="27.1" height="2.0" fill="#c2c2ca"/><rect x="20.1" y="65.2" width="16.7" height="2.0" fill="#c2c2ca"/><rect x="20.6" y="72.4" width="16.2" height="2.0" fill="#c2c2ca"/><rect x="6.9" y="79.6" width="29.9" height="2.0" fill="#c2c2ca"/><rect x="16.3" y="86.8" width="20.5" height="2.0" fill="#c2c2ca"/><rect x="9.7" y="94.0" width="27.1" height="2.0" fill="#c2c2ca"/><rect x="16.2" y="101.2" width="20.6" height="2.0" fill="#c2c2ca"/><rect x="13.3" y="108.4" width="23.5" height="2.0" fill="#c2c2ca"/><rect x="22.1" y="115.6" width="14.7" height="2.0" fill="#c2c2ca"/><rect x="13.4" y="122.8" width="23.4" height="2.0" fill="#c2c2ca"/><rect x="74.7" y="27.5" width="5" height="1.1" fill="#b8b8c0"/><rect x="74.7" y="49.5" width="5" height="1.1" fill="#b8b8c0"/><rect x="74.7" y="71.5" width="5" height="1.1" fill="#b8b8c0"/><rect x="74.7" y="93.5" width="5" height="1.1" fill="#b8b8c0"/><rect x="74.7" y="115.5" width="5" height="1.1" fill="#b8b8c0"/><rect x="40" y="133" width="20" height="1.1" fill="#b8b8c0"/><rect x="42" y="135.5" width="16" height="1.1" fill="#c0c0c8"/><rect x="3.2" y="62" width="1.1" height="14" fill="#c0c0c8"/></svg><svg class="a" style="left:1425.6px;top:142.7px" width="57" height="28" viewBox="0 0 57 28"><rect width="57" height="28" fill="#EEECF1"/><path d="M7 25.5 Q10 24.5 10.6 18 L11.3 1.7 L12 18 Q12.6 24.5 16 25.5" fill="#c4b8c2" stroke="#8a7a86" stroke-width="0.7"/><rect x="3" y="26" width="52" height="0.5" fill="#d0d0d0"/><rect x="2.5" y="3" width="0.5" height="23" fill="#d8d8d8"/></svg><svg class="a" style="left:0px;top:0px" width="0" height="0" viewBox="0 0 0 0"><defs><linearGradient id="vir" x1="0" y1="1" x2="0" y2="0"><stop offset="0" stop-color="#440154"/><stop offset="0.25" stop-color="#3b528b"/><stop offset="0.5" stop-color="#21918c"/><stop offset="0.75" stop-color="#5ec962"/><stop offset="1" stop-color="#fde725"/></linearGradient></defs></svg><svg class="a" style="left:1425.6px;top:174.6px" width="57" height="50.4" viewBox="0 0 57 50.4"><rect x="0" y="0" width="57" height="50.4" fill="#FBFBFC"/><rect x="7.18" y="4.84" width="13.66" height="13.46" fill="#3b528b"/><rect x="20.69" y="4.84" width="13.66" height="13.46" fill="#2c728e"/><rect x="34.20" y="4.84" width="13.66" height="13.46" fill="#472d7b"/><rect x="7.18" y="18.14" width="13.66" height="13.46" fill="#46307e"/><rect x="20.69" y="18.14" width="13.66" height="13.46" fill="#fde725"/><rect x="34.20" y="18.14" width="13.66" height="13.46" fill="#3e4989"/><rect x="7.18" y="31.45" width="13.66" height="13.46" fill="#440154"/><rect x="20.69" y="31.45" width="13.66" height="13.46" fill="#472d7b"/><rect x="34.20" y="31.45" width="13.66" height="13.46" fill="#33638d"/><rect x="50.39" y="1.01" width="2.68" height="48.38" fill="url(#vir)"/><rect x="23.39" y="46.87" width="8.11" height="0.8" fill="#bbb"/></svg><svg class="a" style="left:1425.6px;top:229px" width="57" height="49.5" viewBox="0 0 57 49.5"><rect x="0" y="0" width="57" height="49.5" fill="#FBFBFC"/><rect x="7.18" y="4.75" width="13.66" height="13.22" fill="#3b528b"/><rect x="20.69" y="4.75" width="13.66" height="13.22" fill="#2c728e"/><rect x="34.20" y="4.75" width="13.66" height="13.22" fill="#472d7b"/><rect x="7.18" y="17.82" width="13.66" height="13.22" fill="#46307e"/><rect x="20.69" y="17.82" width="13.66" height="13.22" fill="#fde725"/><rect x="34.20" y="17.82" width="13.66" height="13.22" fill="#472d7b"/><rect x="7.18" y="30.89" width="13.66" height="13.22" fill="#440154"/><rect x="20.69" y="30.89" width="13.66" height="13.22" fill="#3e4989"/><rect x="34.20" y="30.89" width="13.66" height="13.22" fill="#3e4989"/><rect x="50.39" y="0.99" width="2.68" height="47.52" fill="url(#vir)"/><rect x="23.39" y="46.04" width="8.11" height="0.8" fill="#bbb"/></svg><svg class="a" style="left:1425.7px;top:282px" width="57" height="50" viewBox="0 0 57 50"><rect x="0" y="0" width="57" height="50" fill="#FBFBFC"/><rect x="7.18" y="4.80" width="13.66" height="13.35" fill="#3b528b"/><rect x="20.69" y="4.80" width="13.66" height="13.35" fill="#2c728e"/><rect x="34.20" y="4.80" width="13.66" height="13.35" fill="#472d7b"/><rect x="7.18" y="18.00" width="13.66" height="13.35" fill="#46307e"/><rect x="20.69" y="18.00" width="13.66" height="13.35" fill="#fde725"/><rect x="34.20" y="18.00" width="13.66" height="13.35" fill="#3e4989"/><rect x="7.18" y="31.20" width="13.66" height="13.35" fill="#440154"/><rect x="20.69" y="31.20" width="13.66" height="13.35" fill="#472d7b"/><rect x="34.20" y="31.20" width="13.66" height="13.35" fill="#33638d"/><rect x="50.39" y="1.00" width="2.68" height="48.00" fill="url(#vir)"/><rect x="23.39" y="46.50" width="8.11" height="0.8" fill="#bbb"/></svg><svg class="a" style="left:1425.7px;top:335.3px" width="57" height="51" viewBox="0 0 57 51"><rect x="0" y="0" width="57" height="51" fill="#FBFBFC"/><rect x="7.18" y="4.90" width="13.66" height="13.61" fill="#3b528b"/><rect x="20.69" y="4.90" width="13.66" height="13.61" fill="#2c728e"/><rect x="34.20" y="4.90" width="13.66" height="13.61" fill="#472d7b"/><rect x="7.18" y="18.36" width="13.66" height="13.61" fill="#3e4989"/><rect x="20.69" y="18.36" width="13.66" height="13.61" fill="#fde725"/><rect x="34.20" y="18.36" width="13.66" height="13.61" fill="#46307e"/><rect x="7.18" y="31.82" width="13.66" height="13.61" fill="#440154"/><rect x="20.69" y="31.82" width="13.66" height="13.61" fill="#472d7b"/><rect x="34.20" y="31.82" width="13.66" height="13.61" fill="#3e4989"/><rect x="50.39" y="1.02" width="2.68" height="48.96" fill="url(#vir)"/><rect x="23.39" y="47.43" width="8.11" height="0.8" fill="#bbb"/></svg><svg class="a" style="left:1425.6px;top:390px" width="57" height="44.5" viewBox="0 0 57 44.5"><rect width="57" height="44.5" fill="#FFFFFF"/><rect x="2" y="3" width="8" height="38" fill="#b9c6e6"/><rect x="2" y="3.0" width="8" height="0.7" fill="#FFFFFF"/><rect x="2" y="5.4" width="8" height="0.7" fill="#FFFFFF"/><rect x="2" y="7.8" width="8" height="0.7" fill="#FFFFFF"/><rect x="2" y="10.2" width="8" height="0.7" fill="#FFFFFF"/><rect x="2" y="12.6" width="8" height="0.7" fill="#FFFFFF"/><rect x="2" y="15.0" width="8" height="0.7" fill="#FFFFFF"/><rect x="2" y="17.4" width="8" height="0.7" fill="#FFFFFF"/><rect x="2" y="19.8" width="8" height="0.7" fill="#FFFFFF"/><rect x="2" y="22.2" width="8" height="0.7" fill="#FFFFFF"/><rect x="2" y="24.6" width="8" height="0.7" fill="#FFFFFF"/><rect x="2" y="27.0" width="8" height="0.7" fill="#FFFFFF"/><rect x="2" y="29.4" width="8" height="0.7" fill="#FFFFFF"/><rect x="2" y="31.8" width="8" height="0.7" fill="#FFFFFF"/><rect x="2" y="34.2" width="8" height="0.7" fill="#FFFFFF"/><rect x="2" y="36.6" width="8" height="0.7" fill="#FFFFFF"/><rect x="2" y="39.0" width="8" height="0.7" fill="#FFFFFF"/><rect x="2" y="40" width="50" height="1.5" fill="#9fb0d8"/><rect x="27" y="6" width="6" height="3" fill="#8fd694"/><rect x="14" y="17" width="5" height="3" fill="#d8d0ee"/><rect x="40" y="17" width="5" height="3" fill="#8fd694"/><rect x="8" y="27" width="4" height="2.5" fill="#eee"/><rect x="20" y="27" width="4" height="2.5" fill="#d8d0ee"/><rect x="34" y="27" width="5" height="2.5" fill="#6ccf8a"/><rect x="48" y="27" width="4" height="2.5" fill="#f0c080"/><rect x="5" y="39" width="50" height="2" fill="#e0e8e0"/><path d="M30 9L16 17M30 9L42 17M16 20L10 27M16 20L22 27M42 20L36 27M42 20L50 27" stroke="#bbb" stroke-width="0.4"/></svg><div class="a" style="left:1437.6px;top:438.5px;width:32.2px;height:55.5px;background:#FFFFFF;border:1.5px solid #259AE9"></div><svg class="a" style="left:1440px;top:441px" width="28" height="51" viewBox="0 0 28 51"><rect x="14" y="3" width="8" height="10" fill="#3e4a89"/><rect x="16.5" y="6" width="3" height="3" fill="#fde725"/><rect x="14" y="13" width="8" height="34" fill="#ECEBF0"/><defs><linearGradient id="vir3" x1="0" y1="1" x2="0" y2="0"><stop offset="0" stop-color="#440154"/><stop offset="0.5" stop-color="#21918c"/><stop offset="1" stop-color="#fde725"/></linearGradient></defs><rect x="24" y="3" width="2" height="42" fill="url(#vir3)"/><rect x="3" y="5.0" width="9" height="0.8" fill="#aaa"/><rect x="3" y="8.3" width="9" height="0.8" fill="#aaa"/><rect x="3" y="11.6" width="9" height="0.8" fill="#aaa"/><rect x="3" y="14.9" width="9" height="0.8" fill="#aaa"/><rect x="3" y="18.2" width="9" height="0.8" fill="#aaa"/><rect x="3" y="21.5" width="9" height="0.8" fill="#aaa"/><rect x="3" y="24.8" width="9" height="0.8" fill="#aaa"/><rect x="3" y="28.1" width="9" height="0.8" fill="#aaa"/><rect x="3" y="31.4" width="9" height="0.8" fill="#aaa"/><rect x="3" y="34.7" width="9" height="0.8" fill="#aaa"/><rect x="3" y="38.0" width="9" height="0.8" fill="#aaa"/><rect x="3" y="41.3" width="9" height="0.8" fill="#aaa"/><rect x="3" y="44.6" width="9" height="0.8" fill="#aaa"/></svg><svg class="a" style="left:1487px;top:146.7px" width="7.4" height="4.3" viewBox="0 0 7.4 4.3"><path d="M3.7 0L7.4 4.3H0z" fill="#3c4856"/></svg><div class="a" style="left:1486.3px;top:154.7px;width:8.7px;height:331px;background:#17222A;border:1px solid #2d3a47;border-radius:4.3px"></div><div class="a" style="left:1487.2px;top:329.8px;width:7px;height:153px;background:#60798B;border-radius:3.5px"></div><svg class="a" style="left:1487px;top:487.5px" width="7.4" height="4.3" viewBox="0 0 7.4 4.3"><path d="M0 0H7.4L3.7 4.3z" fill="#3c4856"/></svg><div class="a" style="left:1351.7px;top:500px;width:82.2px;height:16.2px;background:#425462;border-radius:0 0 3px 3px"></div><div class="t s" style="left:1355.50px;top:504.03px;font-size:10.593px;color:#D8DBDE;transform:scaleX(0.9346);transform-origin:0 0;">Variable Explorer</div><div class="a" style="left:1436px;top:499px;width:27.2px;height:17.2px;background:#51677A;border-radius:0 0 3px 3px"></div><div class="a" style="left:1436px;top:499px;width:27.2px;height:2.5px;background:#259AE9;"></div><div class="t s" style="left:1439.00px;top:504.03px;font-size:10.593px;color:#D8DBDE;transform:scaleX(0.9346);transform-origin:0 0;">Plots</div><div class="a" style="left:1314px;top:523px;width:186px;height:273px;background:#17222A;"></div><svg class="a" style="left:1323.5px;top:533.5px" width="14" height="11" viewBox="0 0 14 11"><rect x="0.75" y="0.75" width="12.5" height="9.5" rx="1.2" fill="none" stroke="#E8EAEC" stroke-width="1.5"/><rect x="7.5" y="0.75" width="5.8" height="2.2" fill="#E8EAEC"/></svg><div class="a" style="left:1348.8px;top:535.4px;width:53.4px;height:20.6px;background:#51677A;border-radius:3px 3px 0 0"></div><div class="a" style="left:1348.8px;top:552.6px;width:53.4px;height:3.4px;background:#259AE9;"></div><div class="t s" style="left:1355.50px;top:540.72px;font-size:10.486px;color:#DDE0E3;transform:scaleX(0.9346);transform-origin:0 0;">history.py</div><svg class="a" style="left:1478.4px;top:535.4px" width="9" height="8.5" viewBox="0 0 9 8.5"><rect y="0" width="9" height="1.6" fill="#BCC2C8"/><rect y="3.4" width="9" height="1.6" fill="#BCC2C8"/><rect y="6.8" width="9" height="1.6" fill="#BCC2C8"/></svg><div class="a" style="left:1315px;top:555.5px;width:182px;height:220.5px;background:#17222A;border:1px solid #2c3947;border-radius:3px"></div><div class="a" style="left:1319.5px;top:745.6px;width:162.4px;height:15.2px;background:#2B3640;"></div><div class="t m" style="left:1319.5px;top:561.91px;font-size:12.636px;transform:scaleX(0.9259);transform-origin:0 0;color:#F0F1F2"><i style="color:#A6D282">ANN_Train.py'</i>,</div><div class="t m" style="left:1319.5px;top:577.54px;font-size:12.636px;transform:scaleX(0.9259);transform-origin:0 0;color:#F0F1F2">wdir=<i style="color:#A6D282">'D:/Python_Imp/</i></div><div class="t m" style="left:1319.5px;top:593.16px;font-size:12.636px;transform:scaleX(0.9259);transform-origin:0 0;color:#F0F1F2"><i style="color:#A6D282">credit_score'</i>)</div><div class="t m" style="left:1319.5px;top:608.79px;font-size:12.636px;transform:scaleX(0.9259);transform-origin:0 0;color:#F0F1F2">runfile(<i style="color:#A6D282">'D:/</i></div><div class="t m" style="left:1319.5px;top:624.41px;font-size:12.636px;transform:scaleX(0.9259);transform-origin:0 0;color:#F0F1F2"><i style="color:#A6D282">Python_Imp/</i></div><div class="t m" style="left:1319.5px;top:640.04px;font-size:12.636px;transform:scaleX(0.9259);transform-origin:0 0;color:#F0F1F2"><i style="color:#A6D282">credit_score/ANN.py'</i>,</div><div class="t m" style="left:1319.5px;top:655.66px;font-size:12.636px;transform:scaleX(0.9259);transform-origin:0 0;color:#F0F1F2">wdir=<i style="color:#A6D282">'D:/Python_Imp/</i></div><div class="t m" style="left:1319.5px;top:671.29px;font-size:12.636px;transform:scaleX(0.9259);transform-origin:0 0;color:#F0F1F2"><i style="color:#A6D282">credit_score'</i>)</div><div class="t m" style="left:1319.5px;top:686.91px;font-size:12.636px;transform:scaleX(0.9259);transform-origin:0 0;color:#F0F1F2">runfile(<i style="color:#A6D282">'D:/</i></div><div class="t m" style="left:1319.5px;top:702.54px;font-size:12.636px;transform:scaleX(0.9259);transform-origin:0 0;color:#F0F1F2"><i style="color:#A6D282">Python_Imp/</i></div><div class="t m" style="left:1319.5px;top:718.16px;font-size:12.636px;transform:scaleX(0.9259);transform-origin:0 0;color:#F0F1F2"><i style="color:#A6D282">credit_score/ANN.py'</i>,</div><div class="t m" style="left:1319.5px;top:733.79px;font-size:12.636px;transform:scaleX(0.9259);transform-origin:0 0;color:#F0F1F2">wdir=<i style="color:#A6D282">'D:/Python_Imp/</i></div><div class="t m" style="left:1319.5px;top:749.41px;font-size:12.636px;transform:scaleX(0.9259);transform-origin:0 0;color:#F0F1F2"><i style="color:#A6D282">credit_score'</i>)</div><svg class="a" style="left:1487px;top:565.5px" width="7.4" height="4" viewBox="0 0 7.4 4"><path d="M3.7 0L7.4 4H0z" fill="#3c4856"/></svg><div class="a" style="left:1486.5px;top:571.5px;width:8.2px;height:193.5px;background:#17222A;border:1px solid #2d3a47;border-radius:4px"></div><div class="a" style="left:1487.2px;top:751px;width:6.8px;height:10.6px;background:#60798B;border-radius:3.4px"></div><svg class="a" style="left:1487px;top:767px" width="7.4" height="4" viewBox="0 0 7.4 4"><path d="M0 0H7.4L3.7 4z" fill="#3c4856"/></svg><div class="a" style="left:1375.7px;top:777.5px;width:36.2px;height:17.8px;background:#51677A;border-radius:0 0 3px 3px"></div><div class="a" style="left:1375.7px;top:777.5px;width:36.2px;height:2.5px;background:#259AE9;"></div><div class="t s" style="left:1378.60px;top:782.03px;font-size:10.593px;color:#DDE0E3;transform:scaleX(0.9346);transform-origin:0 0;">History</div><div class="a" style="left:1413.7px;top:777.5px;width:25.6px;height:17.8px;background:#425462;border-radius:0 0 3px 3px"></div><div class="t s" style="left:1416.50px;top:782.03px;font-size:10.593px;color:#DDE0E3;transform:scaleX(0.9346);transform-origin:0 0;">Help</div></body></html>
